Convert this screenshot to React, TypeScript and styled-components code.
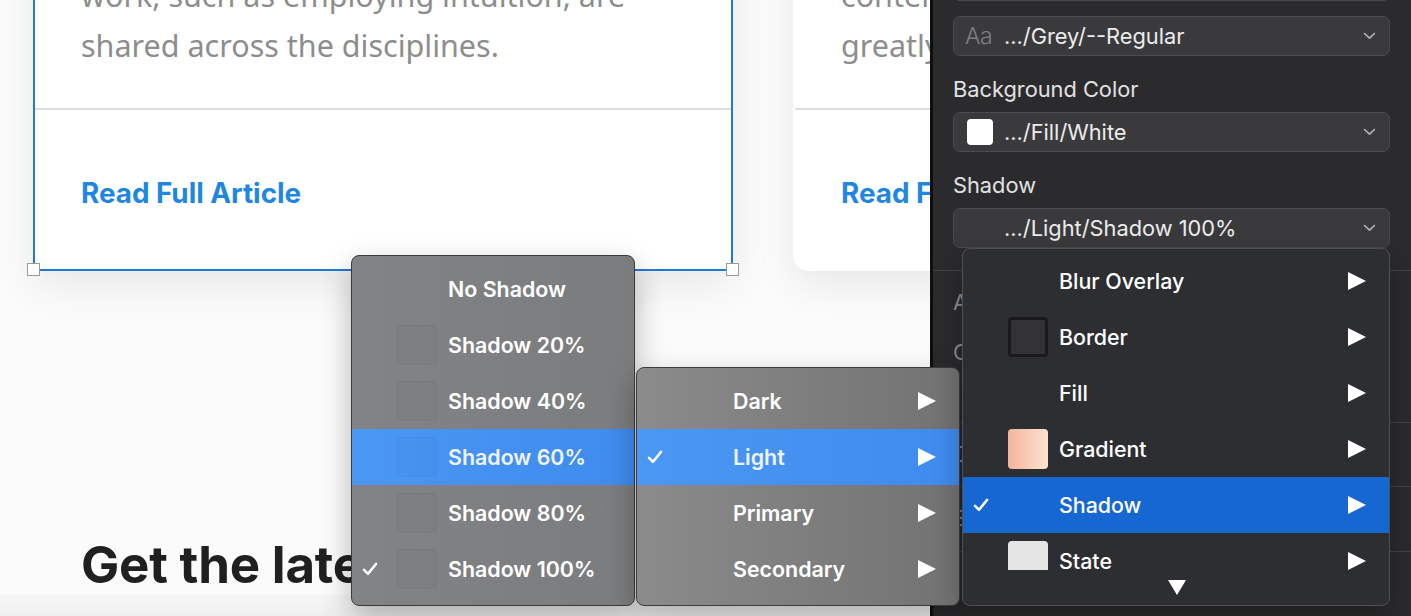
import React from 'react';
import styled, { createGlobalStyle } from 'styled-components';

const GlobalStyle = createGlobalStyle`
  html, body { margin: 0; padding: 0; background: #fbfbfb; }
  body { font-family: Inter, "Noto Sans", sans-serif; -webkit-font-smoothing: antialiased; }
  * { box-sizing: border-box; }
`;

const Screen = styled.div`
  position: relative;
  display: flex;
  width: 1411px;
  height: 616px;
  overflow: hidden;
`;

/* ---------- Canvas ---------- */
const Canvas = styled.div`
  flex: 0 0 930px;
  height: 616px;
  overflow: hidden;
  background: #fbfbfb;
  display: flex;
  flex-direction: column;
`;

const CardRow = styled.div`
  display: flex;
  gap: 60px;
  padding-left: 33px;
  margin-top: -80px;
`;

const Card = styled.div<{ $selected?: boolean }>`
  position: relative;
  flex: 0 0 700px;
  width: 700px;
  background: #fff;
  border: 2px solid ${p => (p.$selected ? '#2179d6' : 'transparent')};
  border-radius: ${p => (p.$selected ? '0' : '0 0 16px 16px')};
  box-shadow: 0 14px 40px rgba(0, 0, 0, 0.08);
`;

const CardBody = styled.div`
  padding: 48px 46px 38px;
  border-bottom: 2px solid #dedede;
`;

const Para = styled.p`
  margin: 0;
  font-family: "Noto Sans", "Open Sans", sans-serif;
  font-size: 30.5px;
  line-height: 50px;
  color: #8d8d8d;
  white-space: nowrap;
`;

const CardFooter = styled.div`
  padding: 64px 46px 57px;
`;

const ReadLink = styled.a`
  display: block;
  font-family: Inter, sans-serif;
  font-weight: 700;
  font-size: 27.8px;
  line-height: 38px;
  color: #1f87e2;
  text-decoration: none;
  white-space: nowrap;
`;

const Handle = styled.span<{ $side: 'left' | 'right' }>`
  position: absolute;
  bottom: -7px;
  ${p => (p.$side === 'left' ? 'left: -8px;' : 'right: -8px;')}
  width: 13px;
  height: 13px;
  background: #fff;
  border: 1px solid #9a9a9a;
`;

const Heading = styled.h2`
  margin: 264px 0 0;
  padding-left: 81px;
  font-family: Inter, sans-serif;
  font-weight: 700;
  font-size: 51px;
  line-height: 60px;
  letter-spacing: -0.2px;
  color: #202020;
  white-space: nowrap;
`;

const NextSection = styled.div`
  flex: 1;
  background: linear-gradient(#f6f6f6, #efefef);
`;

/* ---------- Inspector ---------- */
const Inspector = styled.aside`
  flex: 1;
  height: 616px;
  background: #2b2b2d;
  border-left: 3px solid #0f0f10;
  padding: 0 21px 0 20px;
  display: flex;
  flex-direction: column;
  font-family: Inter, sans-serif;
  color: #e6e6e6;
`;

const Select = styled.div<{ $first?: boolean; $gap?: number }>`
  height: 40px;
  flex: 0 0 40px;
  margin-top: ${p => (p.$first ? '-39px' : `${p.$gap ?? 0}px`)};
  background: #3a3a3c;
  border: 1px solid #4b4b4d;
  border-radius: 7px;
  display: flex;
  align-items: center;
  padding: 0 10px 0 12px;
  gap: 10px;
  font-size: 21.8px;
  color: #ececec;
`;

const IconSlot = styled.span`
  flex: 0 0 28px;
  display: flex;
  align-items: center;
`;

const AaIcon = styled.span`
  font-size: 23px;
  font-weight: 300;
  color: #7e7e80;
  letter-spacing: -0.5px;
  margin-left: -1px;
`;

const ColorChip = styled.span<{ $color: string }>`
  display: block;
  width: 26px;
  height: 26px;
  margin-left: 1px;
  border-radius: 4px;
  background: ${p => p.$color};
`;

const SelectText = styled.span`
  flex: 1;
  white-space: nowrap;
`;

const ChevronSlot = styled.span`
  display: flex;
  align-items: center;
  padding-right: 3px;
`;

const Label = styled.div`
  margin: 21px 0 11px;
  font-size: 21.8px;
  line-height: 24px;
  color: #e2e2e2;
`;

const Divider = styled.div`
  margin: 22px -21px 0 -20px;
  height: 1px;
  flex: 0 0 1px;
  background: #434345;
`;

const SectionRow = styled.div<{ $h: number }>`
  height: ${p => p.$h}px;
  flex: 0 0 ${p => p.$h}px;
  margin: 0 -21px 0 -20px;
  padding: 19px 21px 0 20px;
  border-bottom: 1px solid #434345;
  display: flex;
  flex-direction: column;
  gap: 26px;
`;

const SectionLabel = styled.div`
  font-size: 21.8px;
  line-height: 24px;
  color: #8c8c8e;
`;

/* ---------- Menus ---------- */
const Menu = styled.div`
  position: absolute;
  border-radius: 8px;
  box-shadow: 0 12px 30px rgba(0, 0, 0, 0.28);
  font-family: Inter, sans-serif;
  color: #fff;
  overflow: hidden;
`;

const ShadowMenu = styled(Menu)`
  left: 351px;
  top: 255px;
  width: 284px;
  padding: 5px 0 8px;
  background: linear-gradient(90deg, #828385, #7b7c7e);
  border: 1px solid #3a3a3b;
  font-weight: 600;
`;

const ThemeMenu = styled(Menu)`
  left: 636px;
  top: 367px;
  width: 324px;
  padding: 5px 0 8px;
  background: linear-gradient(90deg, #8b8b8b, #727272);
  border: 1px solid #3c3c3c;
  font-weight: 600;
`;

const StyleMenu = styled(Menu)`
  left: 962px;
  top: 248px;
  width: 428px;
  padding: 4px 0 0;
  background: #2d2e31;
  border: 1px solid #505053;
  font-weight: 500;
`;

const MenuViewport = styled.div`
  height: 317px;
  overflow: hidden;
`;

const MenuFooter = styled.div`
  height: 35px;
  display: flex;
  justify-content: center;
  align-items: flex-start;
  padding-top: 10px;
  padding-left: 2px;
`;

const Item = styled.div<{ $active?: boolean; $tone?: 'light' | 'dark' }>`
  height: 56px;
  display: grid;
  grid-template-columns: 45px 40px 1fr auto;
  align-items: center;
  padding-right: 23px;
  background: ${p =>
    p.$active
      ? p.$tone === 'dark'
        ? '#1767d3'
        : 'linear-gradient(90deg, #4b97f4, #3f8bee)'
      : 'transparent'};
  color: ${p => (p.$active && p.$tone !== 'dark' ? '#eef4ff' : '#fff')};
`;

const Cell = styled.span<{ $pad?: number }>`
  display: flex;
  align-items: center;
  padding-left: ${p => p.$pad ?? 0}px;
`;

const ItemLabel = styled.span`
  padding-left: 11px;
  font-size: 21.4px;
  white-space: nowrap;
`;

const Swatch = styled.span<{ $kind: 'ghost' | 'border' | 'gradient' | 'state' }>`
  display: block;
  width: 40px;
  height: 40px;
  border-radius: 4px;
  ${p =>
    p.$kind === 'ghost'
      ? 'background: rgba(0,0,0,0.018); border: 1px solid rgba(0,0,0,0.035); box-shadow: 0 1px 0 rgba(255,255,255,0.03);'
      : p.$kind === 'border'
      ? 'background: #333336; border: 3px solid #1a1a1c;'
      : p.$kind === 'gradient'
      ? 'background: linear-gradient(90deg, #f3b49c, #fde3d2);'
      : 'background: #e5e5e6;'}
`;

const Check = () => (
  <svg width="16" height="14" viewBox="0 0 16 14">
    <path d="M2 7.8 L6 11.8 L14 2" fill="none" stroke="#fff" strokeWidth="2.6" strokeLinecap="round" strokeLinejoin="round" />
  </svg>
);

const ArrowRight = () => (
  <svg width="18" height="18" viewBox="0 0 18 18">
    <polygon points="0,0 18,9 0,18" fill="#fff" />
  </svg>
);

const ArrowDown = () => (
  <svg width="18" height="15" viewBox="0 0 18 15">
    <polygon points="0,0 18,0 9,15" fill="#fff" />
  </svg>
);

const Chevron = () => (
  <svg width="13" height="8" viewBox="0 0 13 8">
    <polyline points="1.5,1.5 6.5,6.2 11.5,1.5" fill="none" stroke="#b5b5b7" strokeWidth="1.6" strokeLinecap="round" strokeLinejoin="round" />
  </svg>
);

type Row = {
  label: string;
  checked?: boolean;
  active?: boolean;
  swatch?: 'ghost' | 'border' | 'gradient' | 'state';
  sub?: boolean;
};

const MenuRows = ({ rows, tone }: { rows: Row[]; tone: 'light' | 'dark' }) => (
  <>
    {rows.map(r => (
      <Item key={r.label} $active={r.active} $tone={tone}>
        <Cell $pad={10}>{r.checked ? <Check /> : null}</Cell>
        <Cell>{r.swatch ? <Swatch $kind={r.swatch} /> : null}</Cell>
        <ItemLabel>{r.label}</ItemLabel>
        <Cell>{r.sub ? <ArrowRight /> : null}</Cell>
      </Item>
    ))}
  </>
);

const shadowRows: Row[] = [
  { label: 'No Shadow' },
  { label: 'Shadow 20%', swatch: 'ghost' },
  { label: 'Shadow 40%', swatch: 'ghost' },
  { label: 'Shadow 60%', swatch: 'ghost', active: true },
  { label: 'Shadow 80%', swatch: 'ghost' },
  { label: 'Shadow 100%', swatch: 'ghost', checked: true },
];

const themeRows: Row[] = [
  { label: 'Dark', sub: true },
  { label: 'Light', sub: true, active: true, checked: true },
  { label: 'Primary', sub: true },
  { label: 'Secondary', sub: true },
];

const styleRows: Row[] = [
  { label: 'Blur Overlay', sub: true },
  { label: 'Border', sub: true, swatch: 'border' },
  { label: 'Fill', sub: true },
  { label: 'Gradient', sub: true, swatch: 'gradient' },
  { label: 'Shadow', sub: true, active: true, checked: true },
  { label: 'State', sub: true, swatch: 'state' },
];

export default function App() {
  return (
    <>
      <GlobalStyle />
      <Screen>
        <Canvas>
          <CardRow>
            <Card $selected>
              <CardBody>
                <Para>work, such as employing intuition, are</Para>
                <Para>shared across the disciplines.</Para>
              </CardBody>
              <CardFooter>
                <ReadLink>Read Full Article</ReadLink>
              </CardFooter>
              <Handle $side="left" />
              <Handle $side="right" />
            </Card>
            <Card>
              <CardBody>
                <Para>content, and how it is presented, can</Para>
                <Para>greatly improve the experience.</Para>
              </CardBody>
              <CardFooter>
                <ReadLink>Read Full Article</ReadLink>
              </CardFooter>
            </Card>
          </CardRow>
          <Heading>Get the latest articles</Heading>
          <NextSection />
        </Canvas>

        <Inspector>
          <Select $first>
            <IconSlot><AaIcon>Aa</AaIcon></IconSlot>
            <SelectText>Inter/Regular</SelectText>
            <ChevronSlot><Chevron /></ChevronSlot>
          </Select>
          <Select $gap={15}>
            <IconSlot><AaIcon>Aa</AaIcon></IconSlot>
            <SelectText>.../Grey/--Regular</SelectText>
            <ChevronSlot><Chevron /></ChevronSlot>
          </Select>
          <Label>Background Color</Label>
          <Select>
            <IconSlot><ColorChip $color="#ffffff" /></IconSlot>
            <SelectText>.../Fill/White</SelectText>
            <ChevronSlot><Chevron /></ChevronSlot>
          </Select>
          <Label>Shadow</Label>
          <Select>
            <IconSlot />
            <SelectText>.../Light/Shadow 100%</SelectText>
            <ChevronSlot><Chevron /></ChevronSlot>
          </Select>
          <Divider />
          <SectionRow $h={152}>
            <SectionLabel>Appearance</SectionLabel>
            <SectionLabel>Corner Radius</SectionLabel>
          </SectionRow>
          <SectionRow $h={64}>
            <SectionLabel>Opacity</SectionLabel>
          </SectionRow>
          <SectionRow $h={65}>
            <SectionLabel>Blending</SectionLabel>
          </SectionRow>
        </Inspector>

        <ShadowMenu>
          <MenuRows rows={shadowRows} tone="light" />
        </ShadowMenu>
        <ThemeMenu>
          <MenuRows rows={themeRows} tone="light" />
        </ThemeMenu>
        <StyleMenu>
          <MenuViewport>
            <MenuRows rows={styleRows} tone="dark" />
          </MenuViewport>
          <MenuFooter>
            <ArrowDown />
          </MenuFooter>
        </StyleMenu>
      </Screen>
    </>
  );
}
